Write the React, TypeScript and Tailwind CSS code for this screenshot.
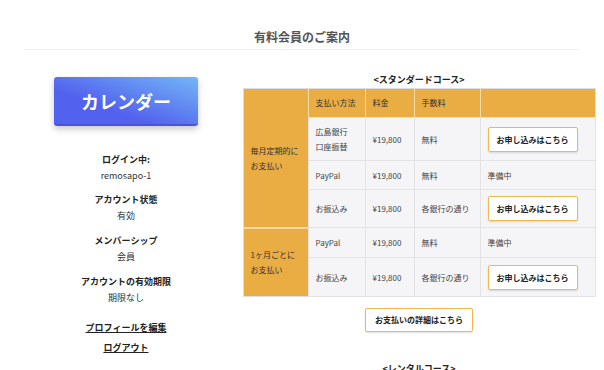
import React from "react";

const font = { fontFamily: '"Noto Sans CJK JP", "Noto Sans", sans-serif' };

function ApplyBtn() {
  return (
    <div className="w-[90px] h-[25px] bg-white border border-[#f0b94e] rounded-[2px] shadow-[0_1px_2px_rgba(0,0,0,0.12)] flex items-center justify-center text-[8px] font-bold text-[#222]">
      お申し込みはこちら
    </div>
  );
}

export default function App() {
  const td = "border border-[#e3e3e6] bg-[#f5f5f7] px-[7px] align-middle text-[8px] text-[#444] leading-[15px]";
  const th = "border-l border-[#f6dcaa] bg-[#e9ad43] px-[7px] text-left font-normal text-[8px] text-[#333] align-middle";
  const first = "bg-[#e9ad43] px-[7px] text-[8px] text-[#333] leading-[15px] align-middle";
  return (
    <div className="w-[604px] h-[370px] overflow-hidden bg-white" style={font}>
      <div className="pt-[29px] text-center text-[12px] leading-4 font-bold text-[#555]">有料会員のご案内</div>
      <div className="mx-[25px] mt-[4px] h-px bg-[#efefef]" />
      <div className="flex mt-[24px]">
        <div className="ml-[25px] w-[202px] flex flex-col items-center text-[9px] leading-4 text-[#222]">
          <div className="mt-[3px] w-[144px] h-[49px] rounded-[3px] bg-[linear-gradient(20deg,#5362ee_35%,#73b6f7_100%)] border-b-2 border-[#4a55cf] shadow-[0_3px_6px_rgba(0,0,0,0.22)] flex items-center justify-center text-white text-[18px] font-bold">
            カレンダー
          </div>
          <div className="mt-[26px] font-bold">ログイン中:</div>
          <div className="text-[#333]">remosapo-1</div>
          <div className="mt-[8px] font-bold">アカウント状態</div>
          <div className="text-[#333]">有効</div>
          <div className="mt-[9px] font-bold">メンバーシップ</div>
          <div className="text-[#333]">会員</div>
          <div className="mt-[9px] font-bold">アカウントの有効期限</div>
          <div className="text-[#333]">期限なし</div>
          <div className="mt-[14px] font-bold underline">プロフィールを編集</div>
          <div className="mt-[4px] font-bold underline">ログアウト</div>
        </div>
        <div className="ml-[16px] w-[352px] flex flex-col items-center">
          <div className="text-[9px] leading-3 font-bold text-[#222]">&lt;スタンダードコース&gt;</div>
          <table className="mt-[2px] w-[352px] table-fixed border-collapse border border-[#dedede]">
            <colgroup>
              <col className="w-[65px]" />
              <col className="w-[57px]" />
              <col className="w-[49px]" />
              <col className="w-[66px]" />
              <col className="w-[115px]" />
            </colgroup>
            <tbody>
              <tr className="h-[29px]">
                <td rowSpan={4} className={first}>毎月定期的に<br />お支払い</td>
                <th className={th}>支払い方法</th>
                <th className={th}>料金</th>
                <th className={th}>手数料</th>
                <th className={th}></th>
              </tr>
              <tr className="h-[43px]">
                <td className={td}>広島銀行<br />口座振替</td>
                <td className={td}>¥19,800</td>
                <td className={td}>無料</td>
                <td className={td}><ApplyBtn /></td>
              </tr>
              <tr className="h-[29px]">
                <td className={td}>PayPal</td>
                <td className={td}>¥19,800</td>
                <td className={td}>無料</td>
                <td className={td}>準備中</td>
              </tr>
              <tr className="h-[38px]">
                <td className={td}>お振込み</td>
                <td className={td}>¥19,800</td>
                <td className={td}>各銀行の通り</td>
                <td className={td}><ApplyBtn /></td>
              </tr>
              <tr className="h-[30px]">
                <td rowSpan={2} className={first + " border-t-2 border-[#f3d7a4]"}>1ヶ月ごとに<br />お支払い</td>
                <td className={td}>PayPal</td>
                <td className={td}>¥19,800</td>
                <td className={td}>無料</td>
                <td className={td}>準備中</td>
              </tr>
              <tr className="h-[39px]">
                <td className={td}>お振込み</td>
                <td className={td}>¥19,800</td>
                <td className={td}>各銀行の通り</td>
                <td className={td}><ApplyBtn /></td>
              </tr>
            </tbody>
          </table>
          <div className="mt-[11px] w-[108px] h-[24px] bg-white border border-[#f0b94e] rounded-[2px] shadow-[0_1px_2px_rgba(0,0,0,0.12)] flex items-center justify-center text-[8px] font-bold text-[#222]">
            お支払いの詳細はこちら
          </div>
          <div className="mt-[31px] text-[9px] leading-3 font-bold text-[#222]">&lt;レンタルコース&gt;</div>
        </div>
      </div>
    </div>
  );
}
